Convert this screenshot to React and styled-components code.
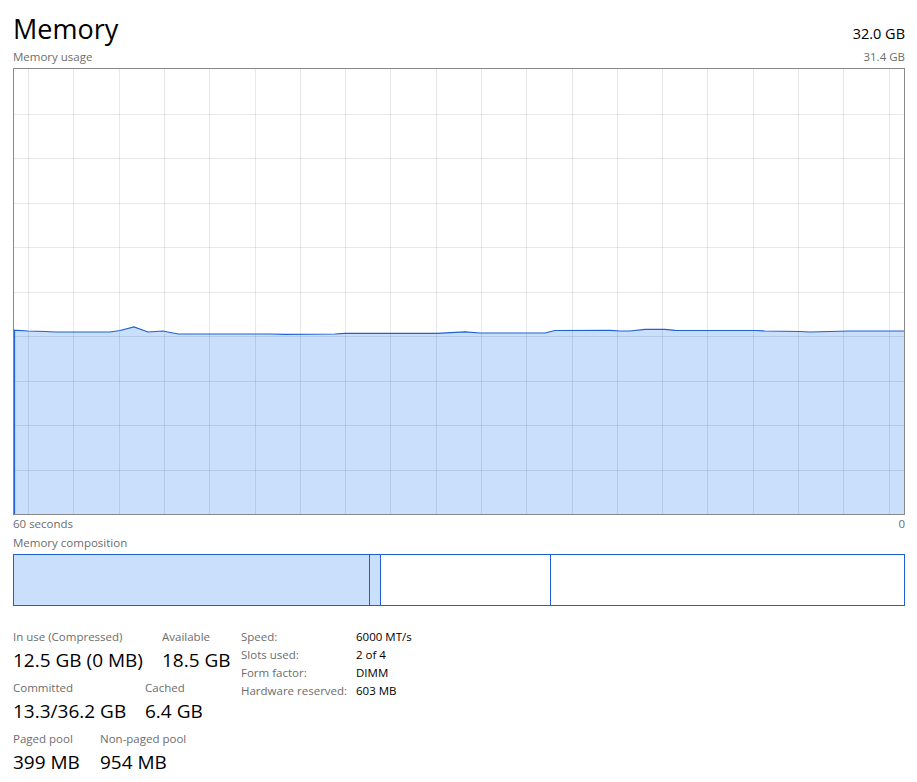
import React from 'react';
import styled, { createGlobalStyle } from 'styled-components';

const GlobalStyle = createGlobalStyle`
  body {
    margin: 0;
    background: #ffffff;
    font-family: "Open Sans", "Noto Sans", sans-serif;
    color: #000;
  }
`

const Page = styled.div`
  width: 892px;
  padding: 12px 12px 0 13px;
`

const Header = styled.div`
  display: flex;
  justify-content: space-between;
  align-items: baseline;
  height: 34px;
`

const Title = styled.h1`
  margin: 0;
  font-size: 27px;
  font-weight: 400;
  line-height: 34px;
`

const Total = styled.span`
  font-size: 14.5px;
  line-height: 34px;
`

const Caption = styled.div`
  display: flex;
  justify-content: space-between;
  margin-top: ${props => props.gap || 0}px;
  font-size: 11.5px;
  line-height: 16px;
  color: #6d6d6d;
`

const GraphBox = styled.div`
  box-sizing: border-box;
  margin-top: 3px;
  height: 447px;
  border: 1px solid #8a8a8a;
  svg { display: block; }
`

const CompBar = styled.div`
  box-sizing: border-box;
  margin-top: 3px;
  height: 52px;
  display: flex;
  border: 1px solid #1b60d9;
`

const CompPart = styled.div`
  box-sizing: border-box;
  width: ${props => props.w}px;
  flex: ${props => props.w ? 'none' : 1};
  background: ${props => props.filled ? '#cadffc' : '#fff'};
  border-right: ${props => props.last ? 'none' : '1px solid #1b60d9'};
`

const Stats = styled.div`
  display: flex;
  margin-top: 23px;
`

const StatColumn = styled.div`
  flex: none;
  width: 215px;
`

const StatRow = styled.div`
  display: flex;
  margin-bottom: 8px;
`

const Stat = styled.div`
  flex: none;
  width: ${props => props.w ? props.w + 'px' : 'auto'};
`

const StatLabel = styled.div`
  font-size: 11.5px;
  line-height: 16px;
  color: #6d6d6d;
  white-space: nowrap;
`

const StatValue = styled.div`
  margin-top: 3px;
  font-size: 19px;
  line-height: 24px;
  white-space: nowrap;
`

const Specs = styled.div`
  display: grid;
  grid-template-columns: 115px auto;
  margin-left: 13px;
  margin-top: -1px;
  font-size: 11.5px;
  line-height: 18px;
  align-self: flex-start;
`

const SpecKey = styled.span`
  color: #6d6d6d;
`

const SpecVal = styled.span`
  color: #000;
`

const line = [
  [13, 330], [28, 331], [45, 331.5], [55, 332], [110, 332], [120, 330.5], [134, 327],
  [148, 332], [163, 331], [178, 334], [270, 334], [285, 334.3], [335, 334], [345, 333.3],
  [437, 333.3], [465, 331.8], [480, 333], [545, 333], [555, 330.5], [610, 330.3],
  [620, 331], [630, 331], [645, 329.3], [665, 329.3], [675, 330.3], [755, 330.5],
  [765, 331], [800, 331.5], [810, 332], [850, 331], [905, 331],
];

function UsageGraph() {
  const pts = line.map(p => p.join(',')).join(' L');
  const hLines = [];
  for (let i = 1; i < 10; i++) hLines.push(69 + i * 44.5);
  const vLines = [];
  for (let x = 28; x < 904; x += 45.3) vLines.push(x);
  return (
    <svg width="890" height="445" viewBox="14 69 890 445">
      <path d={`M13,515 L${pts} L905,515 Z`} fill="#cadffc" />
      {hLines.map(y => <line key={y} x1="14" x2="904" y1={Math.round(y) + 0.5} y2={Math.round(y) + 0.5} stroke="rgba(0,0,0,0.09)" />)}
      {vLines.map(x => <line key={x} y1="69" y2="514" x1={Math.round(x) + 0.5} x2={Math.round(x) + 0.5} stroke="rgba(0,0,0,0.09)" />)}
      <path d={`M14.5,515 L14.5,330 L${pts}`} fill="none" stroke="#1c62d8" strokeWidth="1.2" />
    </svg>
  );
}

export default function App() {
  return (
    <Page>
      <GlobalStyle />
      <Header>
        <Title>Memory</Title>
        <Total>32.0 GB</Total>
      </Header>
      <Caption gap={3}>
        <span>Memory usage</span>
        <span>31.4 GB</span>
      </Caption>
      <GraphBox>
        <UsageGraph />
      </GraphBox>
      <Caption gap={1}>
        <span>60 seconds</span>
        <span>0</span>
      </Caption>
      <Caption gap={3}>
        <span>Memory composition</span>
      </Caption>
      <CompBar>
        <CompPart w={356} filled />
        <CompPart w={11} filled />
        <CompPart w={170} />
        <CompPart last />
      </CompBar>
      <Stats>
        <StatColumn>
          <StatRow>
            <Stat w={149}>
              <StatLabel>In use (Compressed)</StatLabel>
              <StatValue>12.5 GB (0 MB)</StatValue>
            </Stat>
            <Stat>
              <StatLabel>Available</StatLabel>
              <StatValue>18.5 GB</StatValue>
            </Stat>
          </StatRow>
          <StatRow>
            <Stat w={132}>
              <StatLabel>Committed</StatLabel>
              <StatValue>13.3/36.2 GB</StatValue>
            </Stat>
            <Stat>
              <StatLabel>Cached</StatLabel>
              <StatValue>6.4 GB</StatValue>
            </Stat>
          </StatRow>
          <StatRow>
            <Stat w={87}>
              <StatLabel>Paged pool</StatLabel>
              <StatValue>399 MB</StatValue>
            </Stat>
            <Stat>
              <StatLabel>Non-paged pool</StatLabel>
              <StatValue>954 MB</StatValue>
            </Stat>
          </StatRow>
        </StatColumn>
        <Specs>
          <SpecKey>Speed:</SpecKey><SpecVal>6000 MT/s</SpecVal>
          <SpecKey>Slots used:</SpecKey><SpecVal>2 of 4</SpecVal>
          <SpecKey>Form factor:</SpecKey><SpecVal>DIMM</SpecVal>
          <SpecKey>Hardware reserved:</SpecKey><SpecVal>603 MB</SpecVal>
        </Specs>
      </Stats>
    </Page>
  );
}
